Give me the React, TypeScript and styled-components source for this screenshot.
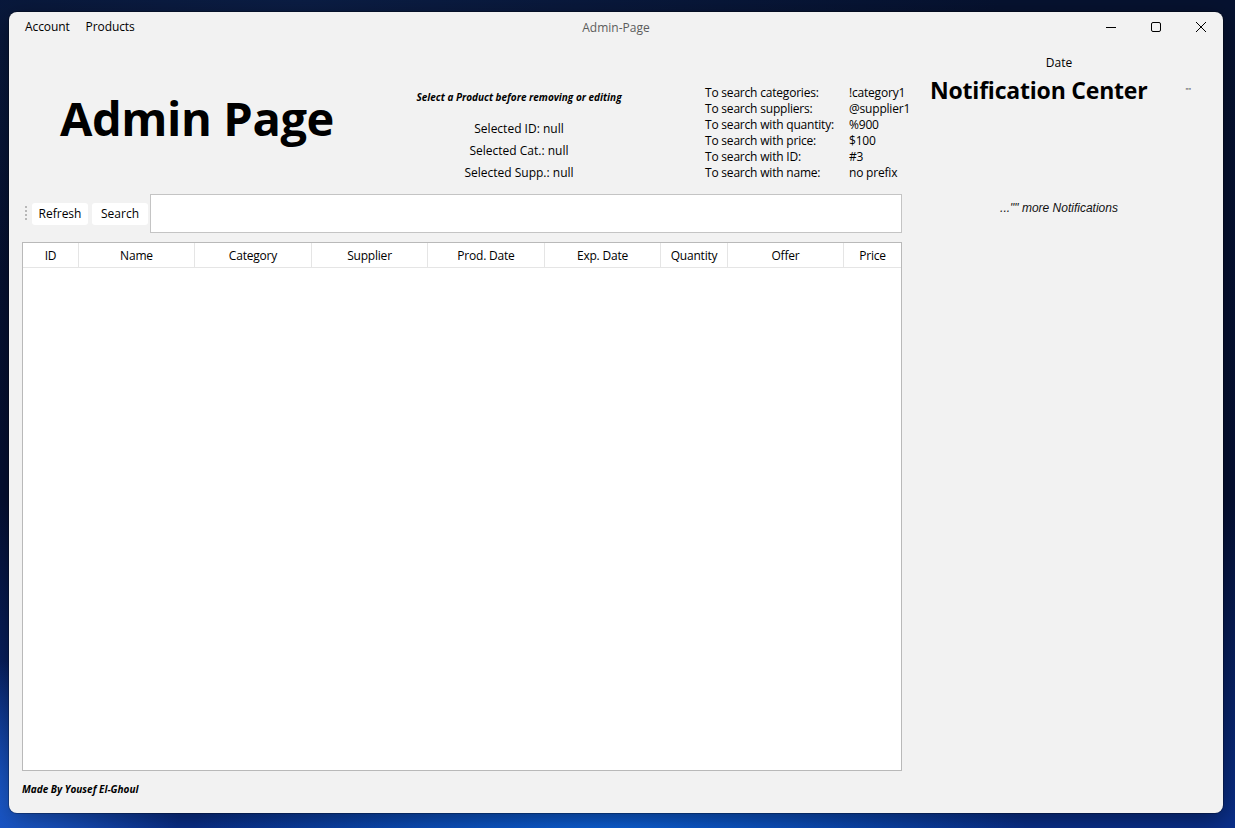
import React from "react";
import styled, { createGlobalStyle } from "styled-components";

const Global = createGlobalStyle`
  html, body { margin: 0; padding: 0; }
  body {
    width: 1235px;
    height: 828px;
    overflow: hidden;
    font-family: "Open Sans", "Noto Sans", sans-serif;
    background:
      radial-gradient(ellipse 420px 120px at 610px 840px, #0d63dc 0%, rgba(13,99,220,0.6) 45%, rgba(13,99,220,0) 100%),
      radial-gradient(ellipse 160px 140px at 20px 800px, #1d5fd6 0%, rgba(29,95,214,0) 100%),
      radial-gradient(ellipse 700px 300px at 300px 0px, #0b1d44 0%, rgba(11,29,68,0) 100%),
      linear-gradient(180deg, #061230 0%, #051033 60%, #0a2f8a 100%);
  }
`;

const Window = styled.div`
  margin: 12px 0 0 9px;
  width: 1214px;
  height: 801px;
  background: #f2f2f2;
  border-radius: 8px;
  box-shadow: 0 0 0 1px rgba(0, 0, 0, 0.25), 0 6px 24px rgba(0, 0, 0, 0.4);
  display: flex;
  flex-direction: column;
  overflow: hidden;
  color: #000;
`;

const TitleBar = styled.div`
  height: 30px;
  display: grid;
  grid-template-columns: 1fr auto 1fr;
  align-items: center;
  font-size: 12px;
`;

const Menu = styled.div`
  display: flex;
  padding-left: 8px;
`;

const MenuItem = styled.span`
  padding: 0 8px;
  line-height: 30px;
  letter-spacing: -0.1px;
`;

const WinTitle = styled.span`
  color: #5c5c5c;
`;

const Controls = styled.div`
  display: flex;
  justify-content: flex-end;
  height: 30px;
`;

const CtrlButton = styled.div`
  width: 45px;
  height: 30px;
  display: flex;
  align-items: center;
  justify-content: center;
`;

const Body = styled.div`
  flex: 1;
  display: flex;
`;

const Main = styled.div`
  width: 880px;
  flex-shrink: 0;
  padding-left: 13px;
  display: flex;
  flex-direction: column;
`;

const Header = styled.div`
  height: 152px;
  display: flex;
  align-items: flex-start;
`;

const TitleBlock = styled.div`
  width: 340px;
  height: 152px;
  flex-shrink: 0;
  padding-left: 38px;
  display: flex;
  align-items: center;
`;

const BigTitle = styled.h1`
  margin: 0;
  font-family: "Open Sans", sans-serif;
  font-weight: 700;
  font-size: 47px;
  letter-spacing: -0.4px;
  line-height: 1;
`;

const SelBlock = styled.div`
  width: 238px;
  flex-shrink: 0;
  padding-top: 48px;
  display: flex;
  flex-direction: column;
  align-items: center;
`;

const Hint = styled.div`
  font-size: 10px;
  font-weight: 700;
  font-style: italic;
  line-height: 14px;
  margin-bottom: 14px;
  white-space: nowrap;
`;

const SelLine = styled.div`
  font-size: 12px;
  line-height: 22px;
`;

const Hints = styled.div`
  flex-shrink: 0;
  margin-left: 67px;
  padding-top: 43px;
  display: grid;
  align-content: start;
  grid-template-columns: 144px auto;
  font-size: 12px;
  line-height: 16px;
  letter-spacing: -0.2px;
  white-space: nowrap;
`;

const Toolbar = styled.div`
  height: 39px;
  display: flex;
  align-items: center;
`;

const Grip = styled.div`
  width: 2px;
  height: 16px;
  margin: 0 5px 0 3px;
  background: repeating-linear-gradient(180deg, #b8b8b8 0 2px, transparent 2px 4px);
`;

const ToolButton = styled.button`
  width: 56px;
  height: 22px;
  margin-right: 4px;
  border: none;
  border-radius: 3px;
  background: #fff;
  font-family: "Open Sans", sans-serif;
  font-size: 12px;
  padding: 0;
  color: #000;
`;

const SearchInput = styled.input`
  flex: 1;
  height: 39px;
  box-sizing: border-box;
  margin-left: -2px;
  border: 1px solid #c4c4c4;
  background: #fff;
  outline: none;
`;

const Table = styled.div`
  margin-top: 9px;
  height: 529px;
  box-sizing: border-box;
  border: 1px solid #b9b9b9;
  background: #fff;
  display: flex;
  flex-direction: column;
`;

const HeadRow = styled.div`
  display: flex;
  height: 25px;
  box-sizing: border-box;
  border-bottom: 1px solid #e5e5e5;
`;

const HeadCell = styled.div<{ $w: number; $last?: boolean }>`
  width: ${(p) => p.$w}px;
  box-sizing: border-box;
  border-right: ${(p) => (p.$last ? "none" : "1px solid #e5e5e5")};
  display: flex;
  align-items: center;
  justify-content: center;
  font-size: 12px;
  letter-spacing: -0.2px;
`;

const Footer = styled.div`
  margin-top: 11px;
  font-size: 10px;
  font-weight: 700;
  font-style: italic;
  line-height: 14px;
`;

const Side = styled.div`
  width: 298px;
  flex-shrink: 0;
  margin-left: 8px;
  display: flex;
  flex-direction: column;
`;

const DateLabel = styled.div`
  margin-top: 13px;
  text-align: center;
  font-size: 12px;
  line-height: 16px;
`;

const NotifRow = styled.div`
  margin-top: 3px;
  height: 32px;
  display: flex;
  align-items: center;
  justify-content: space-between;
  padding: 0 17px 0 20px;
`;

const NotifTitle = styled.div`
  font-weight: 700;
  font-size: 23px;
  line-height: 32px;
  letter-spacing: -0.2px;
`;

const Tiny = styled.span`
  font-size: 7px;
  color: #333;
`;

const More = styled.div`
  margin-top: 94px;
  text-align: center;
  font-family: "Liberation Sans", Arial, sans-serif;
  font-style: italic;
  font-size: 12px;
  line-height: 16px;
  color: #111;
`;

const columns: [string, number][] = [
  ["ID", 56],
  ["Name", 116],
  ["Category", 117],
  ["Supplier", 116],
  ["Prod. Date", 117],
  ["Exp. Date", 116],
  ["Quantity", 67],
  ["Offer", 116],
  ["Price", 57],
];

const hints: [string, string][] = [
  ["To search categories:", "!category1"],
  ["To search suppliers:", "@supplier1"],
  ["To search with quantity:", "%900"],
  ["To search with price:", "$100"],
  ["To search with ID:", "#3"],
  ["To search with name:", "no prefix"],
];

export default function App() {
  return (
    <>
      <Global />
      <Window>
        <TitleBar>
          <Menu>
            <MenuItem>Account</MenuItem>
            <MenuItem>Products</MenuItem>
          </Menu>
          <WinTitle>Admin-Page</WinTitle>
          <Controls>
            <CtrlButton>
              <svg width="12" height="12" viewBox="0 0 12 12">
                <path d="M1 6.5h10" stroke="#000" strokeWidth="1" />
              </svg>
            </CtrlButton>
            <CtrlButton>
              <svg width="12" height="12" viewBox="0 0 12 12">
                <rect x="1.5" y="1.5" width="9" height="9" rx="1.5" fill="none" stroke="#000" strokeWidth="1" />
              </svg>
            </CtrlButton>
            <CtrlButton>
              <svg width="12" height="12" viewBox="0 0 12 12">
                <path d="M1 1L11 11M11 1L1 11" stroke="#000" strokeWidth="1" />
              </svg>
            </CtrlButton>
          </Controls>
        </TitleBar>
        <Body>
          <Main>
            <Header>
              <TitleBlock>
                <BigTitle>Admin Page</BigTitle>
              </TitleBlock>
              <SelBlock>
                <Hint>Select a Product before removing or editing</Hint>
                <SelLine>Selected ID: null</SelLine>
                <SelLine>Selected Cat.: null</SelLine>
                <SelLine>Selected Supp.: null</SelLine>
              </SelBlock>
              <Hints>
                {hints.map(([a, b]) => (
                  <React.Fragment key={a}>
                    <span>{a}</span>
                    <span>{b}</span>
                  </React.Fragment>
                ))}
              </Hints>
            </Header>
            <Toolbar>
              <Grip />
              <ToolButton>Refresh</ToolButton>
              <ToolButton>Search</ToolButton>
              <SearchInput />
            </Toolbar>
            <Table>
              <HeadRow>
                {columns.map(([name, w], i) => (
                  <HeadCell key={name} $w={w} $last={i === columns.length - 1}>
                    {name}
                  </HeadCell>
                ))}
              </HeadRow>
            </Table>
            <Footer>Made By Yousef El-Ghoul</Footer>
          </Main>
          <Side>
            <DateLabel>Date</DateLabel>
            <NotifRow>
              <NotifTitle>Notification Center</NotifTitle>
              <Tiny>""</Tiny>
            </NotifRow>
            <More>..."" more Notifications</More>
          </Side>
        </Body>
      </Window>
    </>
  );
}
